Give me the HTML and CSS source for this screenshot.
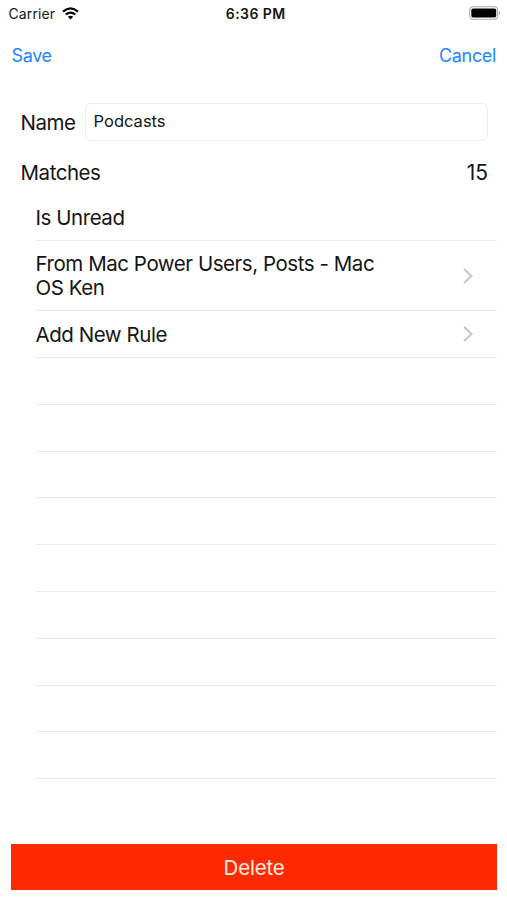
FILE: index.html
```html
<!DOCTYPE html>
<html lang="en">
<head>
<meta charset="utf-8">
<title>Smart Stream</title>
<link rel="stylesheet" href="styles.css">
</head>
<body>
<header class="status">
  <div class="carrier"><span>Carrier</span>
    <svg class="wifi" width="17" height="13" viewBox="0 0 17 13"><path d="M1 4.6Q8.5-1.8 16 4.6"/><path d="M3.7 7.5Q8.5 3.6 13.3 7.5"/><path class="dot" d="M5.8 9.8Q8.5 7.6 11.2 9.8L8.5 12.6z"/></svg>
  </div>
  <span class="time">6:36 PM</span>
  <svg class="battery" width="32" height="14" viewBox="0 0 32 14"><rect class="shell" x=".7" y=".7" width="28" height="12.6" rx="3.6"/><rect x="2.3" y="2.4" width="24.9" height="9.2" rx="1.8"/><path class="cap" d="M30 5q2 2.1 0 4.2z"/></svg>
</header>
<nav class="nav"><a>Save</a><a>Cancel</a></nav>
<main>
  <label class="name"><span>Name</span><span class="field">Podcasts</span></label>
  <div class="matches"><span>Matches</span><span class="count">15</span></div>
  <ul class="rules">
    <li class="unread"><span>Is Unread</span></li>
    <li class="from"><span>From Mac Power Users, Posts - Mac<br>OS Ken</span><svg class="chevron" width="10" height="16" viewBox="0 0 10 16"><path d="M1 1L8.5 8L1 15"/></svg></li>
    <li class="add"><span>Add New Rule</span><svg class="chevron" width="10" height="16" viewBox="0 0 10 16"><path d="M1 1L8.5 8L1 15"/></svg></li>
    <li></li><li></li><li></li><li></li><li></li><li></li><li></li><li></li><li></li>
  </ul>
</main>
<button class="delete"><span>Delete</span></button>
</body>
</html>
```
FILE: styles.css
```css
* { box-sizing: border-box; }
body { margin: 0; width: 507px; height: 900px; overflow: hidden; background: #fff; color: #151515; font: 20.5px/24px Inter, "Liberation Sans", sans-serif; letter-spacing: -.45px; display: flex; flex-direction: column; }
.status { height: 28px; padding: 0 6px 0 8.5px; display: grid; grid-template-columns: 1fr auto 1fr; align-items: center; font-size: 14px; letter-spacing: .1px; }
.carrier { display: flex; align-items: center; gap: 7px; }
.time { font-weight: 600; letter-spacing: .45px; padding-left: 2px; }
.wifi { fill: none; stroke: #000; stroke-width: 2.2; margin-top: -1px; }
.wifi .dot { fill: #000; stroke: none; }
.battery { justify-self: end; margin-top: -2px; }
.battery .shell { fill: none; stroke: #aaa; stroke-width: 1.1; }
.battery .cap { fill: #999; }
.nav { height: 54px; padding: 1px 11px 0 11.5px; display: flex; justify-content: space-between; align-items: center; color: #1f86fb; font-size: 18px; letter-spacing: -.35px; }
main { padding: 21px 10px 0 20.5px; }
.name { display: flex; align-items: center; gap: 9.5px; margin-right: 9px; }
.name > span:first-child { padding-top: 1px; }
.field { flex: 1; height: 38px; padding: 5px 7.5px; border: 1px solid #ededed; border-radius: 6px; font-size: 16.5px; letter-spacing: 0; }
.matches { display: flex; justify-content: space-between; margin: 20px 9px 0 0; }
.matches .count { font-size: 21px; letter-spacing: 0; }
.rules { list-style: none; margin: 10px 0 0 15px; padding: 0; }
.rules li { height: 46.8px; border-bottom: 1.5px solid #ebebeb; display: flex; align-items: center; justify-content: space-between; padding-right: 24.5px; }
.rules .unread { height: 46.3px; padding-top: 1px; }
.rules .from { height: 70px; }
.rules .add span { padding-top: 2px; }
.chevron { fill: none; stroke: #c7c7c9; stroke-width: 2; }
.delete { margin: auto 10px 10px 11px; padding: 2px 0 0; height: 46.5px; border: 0; background: #ff2a00; color: #ffe9e3; font: inherit; letter-spacing: -.2px; }
```
